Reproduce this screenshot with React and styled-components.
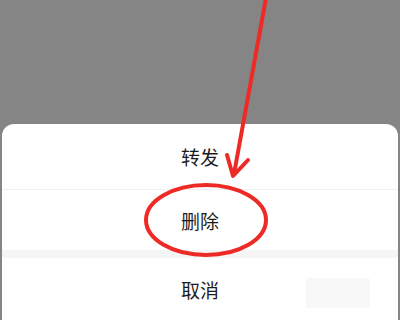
import styled, { createGlobalStyle } from 'styled-components';

const GlobalStyle = createGlobalStyle`
  html, body {
    margin: 0;
    padding: 0;
  }
  body {
    width: 400px;
    height: 320px;
    overflow: hidden;
    background: #858585;
    font-family: "Noto Sans CJK SC", "Noto Sans", sans-serif;
  }
`;

const Screen = styled.div`
  position: relative;
  width: 400px;
  height: 320px;
  display: flex;
  flex-direction: column;
  justify-content: flex-end;
  overflow: hidden;
`;

const Sheet = styled.div`
  margin: 0 2px;
  background: #fff;
  border-radius: 12px 12px 0 0;
  display: flex;
  flex-direction: column;
`;

const Item = styled.div`
  height: ${(p) => p.$h}px;
  display: flex;
  align-items: center;
  justify-content: center;
  font-size: 19px;
  color: #1c1c1c;
  border-bottom: ${(p) => (p.$line ? '1px solid #f0f0f0' : 'none')};
  box-sizing: border-box;
`;

const Gap = styled.div`
  height: 8px;
  background: #f5f5f5;
`;

const Overlay = styled.svg`
  position: absolute;
  left: 0;
  top: 0;
  pointer-events: none;
`;

const Watermark = styled.div`
  position: absolute;
  right: 30px;
  bottom: 12px;
  width: 64px;
  height: 30px;
  background: rgba(240, 240, 240, 0.45);
  border-radius: 2px;
`;

export default function App() {
  return (
    <Screen>
      <GlobalStyle />
      <Sheet>
        <Item $h={66} $line>转发</Item>
        <Item $h={60}>删除</Item>
        <Gap />
        <Item $h={62}>取消</Item>
      </Sheet>
      <Watermark />
      <Overlay width="400" height="320" viewBox="0 0 400 320">
        <g stroke="#ee2a26" strokeWidth="4" fill="none" strokeLinecap="round" strokeLinejoin="round">
          <path d="M266 -2 L234 174" />
          <path d="M227 155 L233 176 L248 160" />
          <ellipse cx="206" cy="220" rx="60" ry="35" />
        </g>
      </Overlay>
    </Screen>
  );
}
